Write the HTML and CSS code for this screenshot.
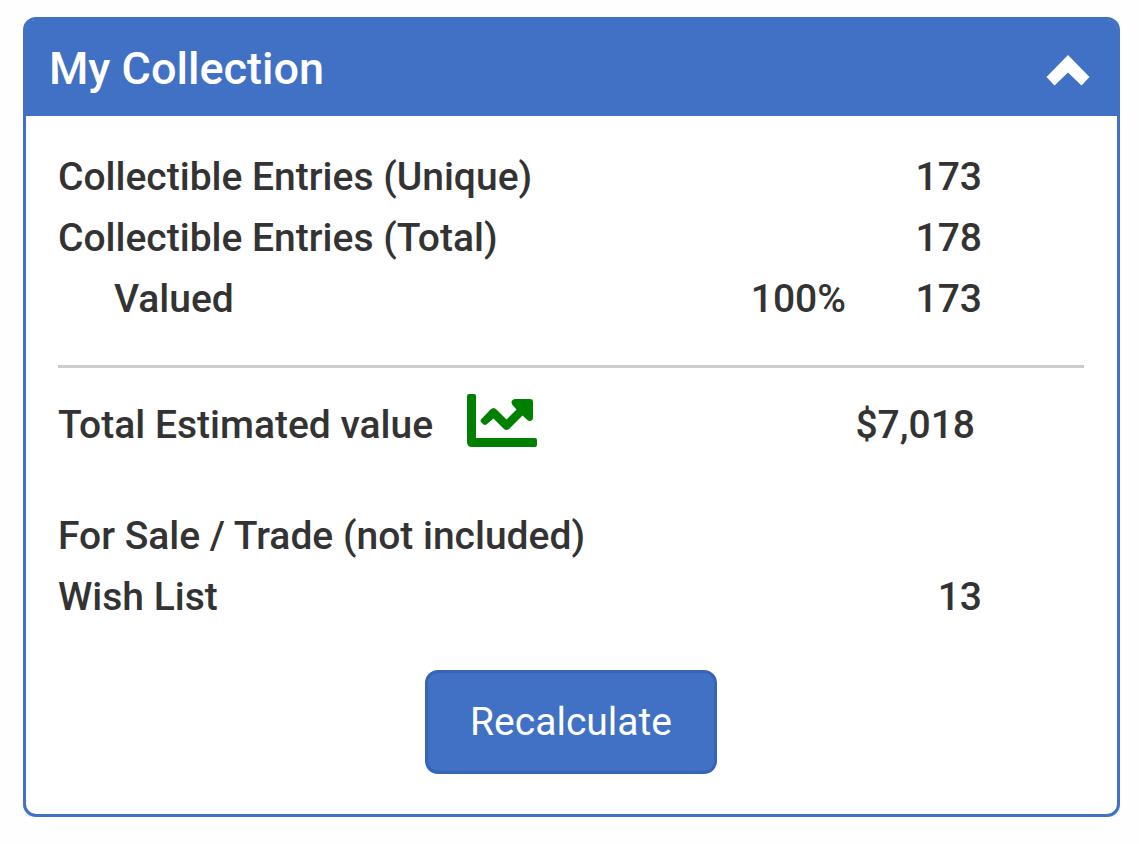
FILE: index.html
```html
<!DOCTYPE html>
<html lang="en">
  <head>
    <meta charset="UTF-8" />
    <meta name="viewport" content="width=device-width, initial-scale=1.0" />

    <title>My Collection</title>

    <link rel="stylesheet" href="styles.css">
  </head>
  <body>
    <section class="panel">
      <header class="panel-heading">
        <h1>My Collection</h1>
        <button class="toggle" type="button" aria-label="Collapse">
          <svg width="44" height="31" viewBox="0 0 44 31" fill="#fff">
            <path d="M22 0 43.5 22 35.5 30.5 22 17.5 8.500 30.5.5 22z" />
          </svg>
        </button>
      </header>

      <div class="panel-body">
        <table class="stats">
          <tr>
            <th scope="row">Collectible Entries (Unique)</th>
            <td class="percent"></td>
            <td class="value">173</td>
          </tr>
          <tr>
            <th scope="row">Collectible Entries (Total)</th>
            <td class="percent"></td>
            <td class="value">178</td>
          </tr>
          <tr>
            <th class="indent" scope="row">Valued</th>
            <td class="percent">100%</td>
            <td class="value">173</td>
          </tr>
        </table>

        <hr />

        <table class="stats">
          <tr>
            <th scope="row">
              <div class="estimate">
                Total Estimated value
                <a class="chart" href="#" aria-label="Value chart">
                  <svg width="70" height="53" viewBox="0 0 70 53" fill="green">
                    <path d="M2 0h5q2 0 2 2v42h59q2 0 2 2v5q0 2-2 2H5q-5 0-5-5V2q0-2 2-2z" />
                    <path d="M14 25.500 23.500 15.500q3-3 6 0L39.500 25.500 49.500 15.500 45.500 11q-2-3 0-5 1-1 3-1H63q3 0 3 3v16q0 2-2 2.700-2 .8-4-1L55.500 21.500 42.500 34.500q-3 3-6 0L26.500 24.500 20 30q-2 2-4 0l-2-2q-1-1 0-2.500z" />
                  </svg>
                </a>
              </div>
            </th>
            <td class="value amount">$7,018</td>
          </tr>
        </table>

        <table class="stats other">
          <tr>
            <th scope="row">For Sale / Trade (not included)</th>
            <td class="value"></td>
          </tr>
          <tr>
            <th scope="row">Wish List</th>
            <td class="value">13</td>
          </tr>
        </table>

        <button class="recalculate" type="button">Recalculate</button>
      </div>
    </section>
  </body>
</html>
```
FILE: styles.css
```css
* {
  box-sizing: border-box;
}
body {
  margin: 17px 19px 27px 23px;
  background-color: #fefefe;
  color: #333;
  font-family: Roboto, Arial, sans-serif;
  font-size: 39px;
  line-height: 56px;
}
.panel {
  border: 3px solid #4071c4;
  border-radius: 13px;
  background-color: #fff;
  box-shadow: 0 3px 3px rgba(0, 0, 0, 0.05);
}
.panel-heading {
  display: flex;
  align-items: center;
  justify-content: space-between;
  padding: 21px 27px 19px 23px;
  background-color: #4071c4;
  border-radius: 9px 9px 0 0;
  color: #fff;
}
h1 {
  margin: 0;
  font-size: 45px;
  font-weight: 500;
}
.toggle {
  padding: 2px 0 0;
  border: none;
  background: none;
  cursor: pointer;
}
svg {
  display: block;
}
.panel-body {
  padding: 30px 33px 40px 32px;
}
.stats {
  width: 100%;
  border-collapse: collapse;
}
th,
td {
  height: 61px;
  padding: 0;
  font-weight: 500;
  text-align: left;
}
.indent {
  padding-left: 56px;
}
.percent {
  text-align: right;
}
.value {
  width: 238px;
  padding-right: 102px;
  text-align: right;
}
.amount {
  padding-right: 109px;
}
.estimate {
  display: flex;
  align-items: center;
  gap: 34px;
}
.chart {
  padding-bottom: 8px;
}
hr {
  margin: 36px 0 26px;
  border: none;
  border-top: 3px solid #ccc;
}
.other {
  margin-top: 50px;
}
.recalculate {
  display: block;
  margin: 43px auto 0;
  padding: 21px 42px;
  border: 3px solid #3765b2;
  border-radius: 13px;
  background-color: #4071c4;
  color: #fff;
  font-family: inherit;
  font-size: 39px;
  line-height: 56px;
  cursor: pointer;
}
.recalculate:hover {
  background-color: #3765b2;
}
```
